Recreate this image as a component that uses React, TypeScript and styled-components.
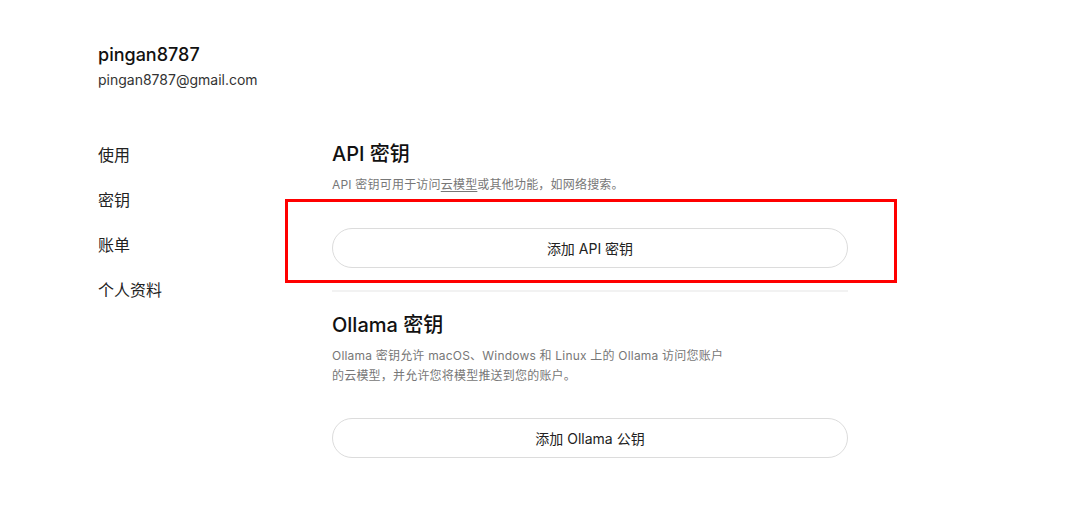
import React from 'react';
import styled, {createGlobalStyle} from "styled-components";

const GlobalStyle = createGlobalStyle`
    body {
        margin: 0;
        background: #fff;
        font-family: "Inter", "Noto Sans CJK SC", sans-serif;
        color: #111;
    }
`;

const navItems = ['使用', '密钥', '账单', '个人资料'];

export default function App() {
    return (
        <Page>
            <GlobalStyle/>
            <Header>
                <UserName>pingan8787</UserName>
                <Email>pingan8787@gmail.com</Email>
            </Header>

            <Layout>
                <Nav>
                    {navItems.map((item) => (
                        <NavItem key={item}>{item}</NavItem>
                    ))}
                </Nav>

                <Main>
                    <Section>
                        <Title>API 密钥</Title>
                        <Desc>
                            API 密钥可用于访问<u>云模型</u>或其他功能，如网络搜索。
                        </Desc>
                        <PillButton $top={33}>添加 API 密钥</PillButton>
                    </Section>

                    <Divider/>

                    <Section>
                        <Title>Ollama 密钥</Title>
                        <Desc>
                            Ollama 密钥允许 macOS、Windows 和 Linux 上的 Ollama 访问您账户的云模型，并允许您将模型推送到您的账户。
                        </Desc>
                        <PillButton $top={32}>添加 Ollama 公钥</PillButton>
                    </Section>
                </Main>
            </Layout>

            {/* 截图里的红色标注框 */}
            <Highlight/>
        </Page>
    );
}

const Page = styled.div`
    position: relative;
    width: 1080px;
    height: 512px;
    padding: 43px 0 0 98px;
    box-sizing: border-box;
`;

const Header = styled.div`
    display: flex;
    flex-direction: column;
    gap: 3px;
`;

const UserName = styled.div`
    font-size: 18px;
    line-height: 24px;
    font-weight: 500;
    color: #111;
`;

const Email = styled.div`
    font-size: 14px;
    line-height: 20px;
    color: #333;
`;

const Layout = styled.div`
    display: grid;
    grid-template-columns: 234px 516px;
    margin-top: 50px;
`;

const Nav = styled.nav`
    display: flex;
    flex-direction: column;
    gap: 21px;
    padding-top: 3px;
`;

const NavItem = styled.div`
    font-size: 16px;
    line-height: 24px;
    color: #222;
`;

const Main = styled.div`
    display: flex;
    flex-direction: column;
`;

const Section = styled.div`
    display: flex;
    flex-direction: column;
`;

const Title = styled.h2`
    margin: 0;
    font-size: 20px;
    line-height: 28px;
    font-weight: 500;
    color: #111;
`;

const Desc = styled.p`
    margin: 7px 0 0;
    max-width: 392px;
    font-size: 12px;
    line-height: 20px;
    letter-spacing: 0.2px;
    color: #777;

    u {
        text-underline-offset: 2px;
    }
`;

const PillButton = styled.button<{ $top: number }>`
    margin-top: ${({$top}) => $top}px;
    height: 40px;
    width: 100%;
    border: 1px solid #dcdcdc;
    border-radius: 20px;
    background: #fff;
    font-family: inherit;
    font-size: 14px;
    color: #222;
    cursor: pointer;
`;

const Divider = styled.div`
    height: 2px;
    background: #f2f2f2;
    margin: 22px 0 19px;
`;

const Highlight = styled.div`
    position: absolute;
    left: 285px;
    top: 199px;
    width: 612px;
    height: 84px;
    box-sizing: border-box;
    border: 3px solid #ff0000;
    pointer-events: none;
`;
